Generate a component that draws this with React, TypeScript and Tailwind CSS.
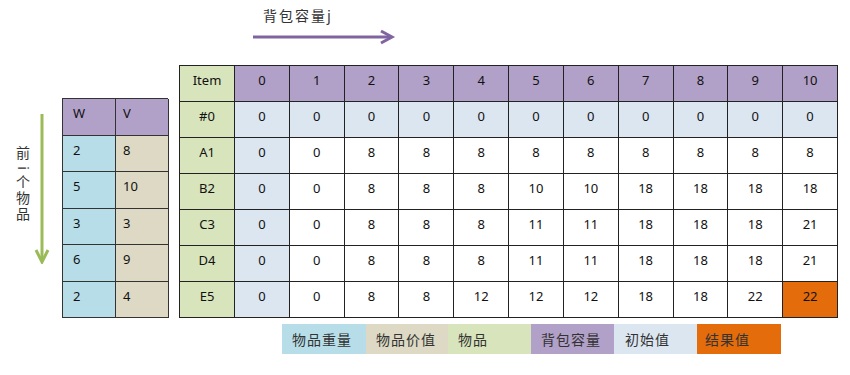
import React from "react";

const headCols = ["0", "1", "2", "3", "4", "5", "6", "7", "8", "9", "10"];
const rows: { label: string; vals: string[] }[] = [
  { label: "#0", vals: ["0", "0", "0", "0", "0", "0", "0", "0", "0", "0", "0"] },
  { label: "A1", vals: ["0", "0", "8", "8", "8", "8", "8", "8", "8", "8", "8"] },
  { label: "B2", vals: ["0", "0", "8", "8", "8", "10", "10", "18", "18", "18", "18"] },
  { label: "C3", vals: ["0", "0", "8", "8", "8", "11", "11", "18", "18", "18", "21"] },
  { label: "D4", vals: ["0", "0", "8", "8", "8", "11", "11", "18", "18", "18", "21"] },
  { label: "E5", vals: ["0", "0", "8", "8", "12", "12", "12", "18", "18", "22", "22"] },
];
const wv = [
  ["2", "8"],
  ["5", "10"],
  ["3", "3"],
  ["6", "9"],
  ["2", "4"],
];

const cjk = { fontFamily: '"Noto Sans CJK SC", "Noto Sans", sans-serif' };
const latin = { fontFamily: '"Noto Sans", "Liberation Sans", sans-serif' };

function Cell({ bg, children }: { bg: string; children?: React.ReactNode }) {
  return (
    <div
      className={`h-[36px] border-r border-b border-[#222] flex justify-center items-start pt-[5px] text-[13px] leading-[18px] text-[#111] ${bg}`}
    >
      {children}
    </div>
  );
}

export default function App() {
  return (
    <div className="w-[850px] h-[375px] bg-white pt-[5px] overflow-hidden" style={latin}>
      <div
        className="ml-[263px] h-[20px] leading-[20px] text-[14px] tracking-[2px] text-[#333]"
        style={cjk}
      >
        背包容量j
      </div>
      <svg className="ml-[252px] block" width="144" height="24" viewBox="0 0 144 24">
        <line x1="1" y1="12" x2="139" y2="12" stroke="#8064A2" strokeWidth="3" />
        <polyline points="129,6 140,12 129,18" fill="none" stroke="#8064A2" strokeWidth="3" />
      </svg>
      <div className="flex items-start mt-[16px]">
        <div className="w-[62px] flex items-start">
          <div className="ml-[15px] mt-[81px] w-[16px] flex flex-col items-center text-[14px] leading-[16px] text-[#333]">
            <div style={{ ...cjk, writingMode: "vertical-rl" }}>前</div>
            <div className="h-[15px] w-[16px] flex items-center justify-center">
              <span className="inline-block rotate-90 text-[14px] leading-[14px]">i</span>
            </div>
            <div className="tracking-[2px]" style={{ ...cjk, writingMode: "vertical-rl" }}>
              个物品
            </div>
          </div>
          <svg className="ml-[3px] mt-[49px] block" width="16" height="150" viewBox="0 0 16 150">
            <line x1="8" y1="0" x2="8" y2="147" stroke="#9BBB59" strokeWidth="3" />
            <polyline points="2,136 8,148 14,136" fill="none" stroke="#9BBB59" strokeWidth="3" />
          </svg>
        </div>
        <div className="mt-[33px] w-[106px] grid grid-cols-[53px_53px] border-l border-t border-[#333]">
          <div className="h-[36.5px] border-r border-b border-[#333] bg-[#B1A0C7] pl-[10px] pt-[5px] text-[13px] leading-[18px] text-[#111]">W</div>
          <div className="h-[36.5px] border-r border-b border-[#333] bg-[#B1A0C7] pl-[7px] pt-[5px] text-[13px] leading-[18px] text-[#111]">V</div>
          {wv.map(([w, v], i) => (
            <React.Fragment key={i}>
              <div className="h-[36.5px] border-r border-b border-[#333] bg-[#B7DEE8] pl-[10px] pt-[5px] text-[13px] leading-[18px] text-[#111]">{w}</div>
              <div className="h-[36.5px] border-r border-b border-[#333] bg-[#DDD9C4] pl-[7px] pt-[5px] text-[13px] leading-[18px] text-[#111]">{v}</div>
            </React.Fragment>
          ))}
        </div>
        <div className="ml-[11px] w-[659px] grid grid-cols-[55px_repeat(11,minmax(0,1fr))] border-l border-t border-[#222]">
          <Cell bg="bg-[#D8E4BC]">Item</Cell>
          {headCols.map((c) => (
            <Cell key={c} bg="bg-[#B1A0C7]">{c}</Cell>
          ))}
          {rows.map((r, ri) => (
            <React.Fragment key={r.label}>
              <Cell bg="bg-[#D8E4BC]">{r.label}</Cell>
              {r.vals.map((v, ci) => {
                let bg = "bg-white";
                if (ri === 0 || ci === 0) bg = "bg-[#DCE6F1]";
                if (ri === rows.length - 1 && ci === r.vals.length - 1) bg = "bg-[#E46C0A]";
                return (
                  <Cell key={ci} bg={bg}>
                    {v}
                  </Cell>
                );
              })}
            </React.Fragment>
          ))}
        </div>
      </div>
      <div className="ml-[282px] mt-[6px] flex h-[30px] text-[14px] leading-[30px] text-[#333] tracking-[1px]" style={cjk}>
        <div className="w-[84px] bg-[#B7DEE8] pl-[10px]">物品重量</div>
        <div className="w-[82px] bg-[#DDD9C4] pl-[10px]">物品价值</div>
        <div className="w-[83px] bg-[#D8E4BC] pl-[10px]">物品</div>
        <div className="w-[83px] bg-[#B1A0C7] pl-[10px]">背包容量</div>
        <div className="w-[83px] bg-[#DCE6F1] pl-[11px]">初始值</div>
        <div className="w-[84px] bg-[#E46C0A] pl-[8px]">结果值</div>
      </div>
    </div>
  );
}
